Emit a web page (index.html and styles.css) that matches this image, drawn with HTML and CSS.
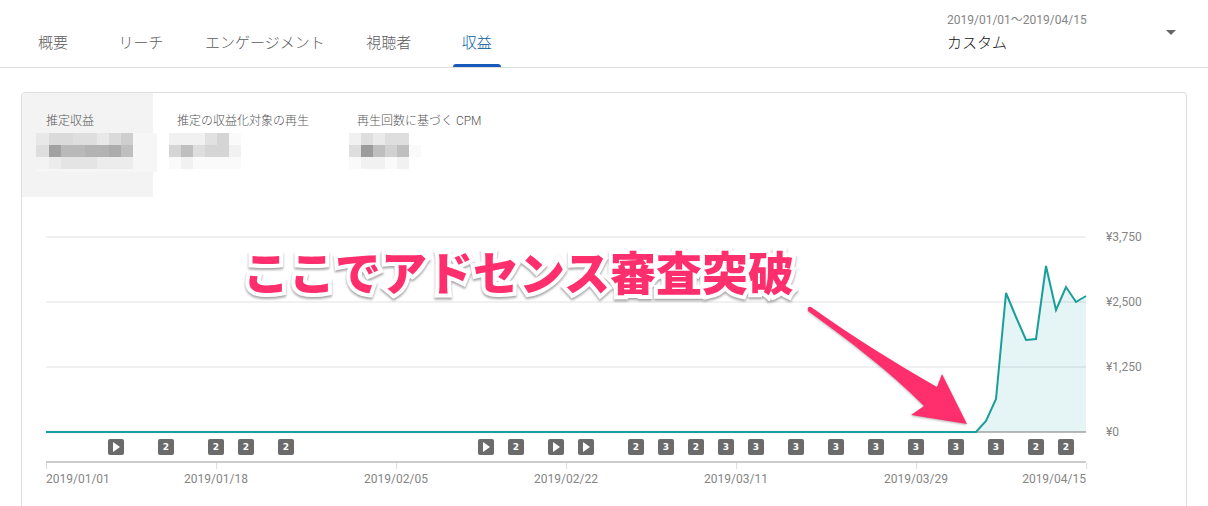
FILE: index.html
```html
<!DOCTYPE html>
<html lang="ja">
<head>
<meta charset="utf-8">
<meta name="viewport" content="width=device-width, initial-scale=1">
<title>収益</title>
<link rel="stylesheet" href="styles.css">
</head>
<body>
<header class="header">
  <nav class="tabs">
    <a class="tab" href="#overview">概要</a>
    <a class="tab" href="#reach">リーチ</a>
    <a class="tab" href="#engagement">エンゲージメント</a>
    <a class="tab" href="#audience">視聴者</a>
    <a class="tab tab-active" href="#revenue" aria-current="page">収益</a>
  </nav>
  <button class="period" type="button">
    <span class="period-text">
      <span class="period-range">2019/01/01～2019/04/15</span>
      <span class="period-name">カスタム</span>
    </span>
    <svg class="caret" width="10" height="5" viewBox="0 0 10 5" aria-hidden="true"><path d="M0 0h10L5 5z"/></svg>
  </button>
</header>
<main class="card">
  <div class="metrics">
    <button class="metric metric-active" type="button">
      <span>推定収益</span>
      <svg class="mosaic" width="121" height="39" viewBox="0 0 121 39" aria-hidden="true">
        <path fill="#f6f6f6" d="M0 36h121v3H0zM97 0h24v36H97z"/>
        <path fill="#e8e8e8" d="M0 0h13v12H0zM61 0h12v12H61z"/>
        <path fill="#dadada" d="M13 0h24v12H13zM73 0h12v12H73z"/>
        <path fill="#dedede" d="M37 0h24v12H37zM0 12h13v12H0z"/>
        <path fill="#cecece" d="M85 0h12v12H85z"/>
        <path fill="#a2a2a2" d="M13 12h12v12H13z"/>
        <path fill="#b9b9b9" d="M25 12h24v12H25z"/>
        <path fill="#b3b3b3" d="M49 12h36v12H49z"/>
        <path fill="#acacac" d="M73 12h12v12H73z"/>
        <path fill="#bfbfbf" d="M85 12h12v12H85z"/>
        <path fill="#ececec" d="M13 24h12v12H13zM61 24h36v12H61z"/>
        <path fill="#e4e4e4" d="M25 24h36v12H25z"/>
      </svg>
    </button>
    <button class="metric" type="button">
      <span>推定の収益化対象の再生</span>
      <svg class="mosaic" width="72" height="36" viewBox="0 0 72 36" aria-hidden="true">
        <path fill="#f1f1f1" d="M0 0h36v12H0zM60 12h12v12H60zM12 24h12v12H12z"/>
        <path fill="#e1e1e1" d="M36 0h12v12H36z"/>
        <path fill="#d5d5d5" d="M48 0h12v12H48zM0 12h12v12H0zM36 12h24v12H36z"/>
        <path fill="#bfbfbf" d="M12 12h12v12H12z"/>
        <path fill="#dedede" d="M24 12h12v12H24z"/>
        <path fill="#fafafa" d="M60 0h12v12H60zM0 24h12v12H0zM24 24h48v12H24z"/>
      </svg>
    </button>
    <button class="metric" type="button">
      <span>再生回数に基づく CPM</span>
      <svg class="mosaic" width="72" height="36" viewBox="0 0 72 36" aria-hidden="true">
        <path fill="#f1f1f1" d="M0 0h12v12H0zM12 24h24v12H12zM48 24h12v12H48z"/>
        <path fill="#dedede" d="M12 0h12v12H12zM36 0h24v12H36zM0 12h12v12H0z"/>
        <path fill="#eaeaea" d="M24 0h12v12H24z"/>
        <path fill="#9c9c9c" d="M12 12h12v12H12z"/>
        <path fill="#bfbfbf" d="M24 12h12v12H24zM48 12h12v12H48z"/>
        <path fill="#d1d1d1" d="M36 12h12v12H36z"/>
        <path fill="#fafafa" d="M60 12h12v12H60zM0 24h12v12H0zM36 24h12v12H36z"/>
      </svg>
    </button>
  </div>
  <section class="chart">
    <div class="plot">
      <svg class="series" viewBox="0 0 1040 195" preserveAspectRatio="none" aria-hidden="true">
        <path class="grid" d="M0 0H1040M0 65H1040M0 130H1040"/>
        <path class="area" d="M930 195L940 184 950 162 960 56 970 80 980 103 990 102 1000 29 1010 73 1020 50 1030 65 1040 59V195z"/>
        <path class="zero" d="M0 195H1040"/>
        <path class="line" d="M0 195H930L940 184 950 162 960 56 970 80 980 103 990 102 1000 29 1010 73 1020 50 1030 65 1040 59"/>
      </svg>
      <svg class="arrow" width="170" height="130" viewBox="800 300 170 130" aria-hidden="true">
        <path d="M811 307C852 336 893 362 937 387L942 374 967 424 911 415 924 406C888 370 848 340 808 311Q807 306 811 307z"/>
      </svg>
      <p class="callout">ここでアドセンス審査突破</p>
    </div>
    <div class="scale">
      <span>¥3,750</span><span>¥2,500</span><span>¥1,250</span><span>¥0</span>
    </div>
    <div class="timeline">
      <div class="marks" id="marks"></div>
      <div class="dates" id="dates"></div>
    </div>
  </section>
</main>
<script src="chart.js"></script>
</body>
</html>
```
FILE: styles.css
```css
* { box-sizing: border-box; }
body {
  margin: 0;
  min-height: 100vh;
  display: flex;
  flex-direction: column;
  background: #fff;
  color: #555;
  font-family: Roboto, "Noto Sans CJK JP", sans-serif;
  font-size: 12px;
  font-weight: 300;
  line-height: 16px;
}
button {
  border: 0;
  background: none;
  padding: 0;
  font: inherit;
  color: inherit;
  text-align: left;
  cursor: pointer;
}
.header {
  display: flex;
  justify-content: space-between;
  height: 68px;
  padding: 0 32px 0 29px;
  border-bottom: 1px solid #dedede;
}
.tabs { display: flex; gap: 40px; }
.tab {
  min-width: 48px;
  padding-top: 33px;
  color: #5c5c5c;
  font-size: 15px;
  line-height: 20px;
  text-align: center;
  text-decoration: none;
  white-space: nowrap;
}
.tab-active { position: relative; color: #045a9f; }
.tab-active::after {
  content: "";
  position: absolute;
  left: 0;
  right: 0;
  bottom: 0;
  height: 3px;
  border-radius: 3px 3px 0 0;
  background: #185abc;
}
.period {
  display: flex;
  justify-content: space-between;
  align-items: center;
  width: 229px;
  padding-bottom: 2px;
}
.period-text { display: flex; flex-direction: column; gap: 5px; }
.period-range { color: #858585; font-weight: 400; }
.period-name { color: #111; font-size: 15px; line-height: 20px; }
.caret { fill: #666; }
.card {
  flex: 1;
  margin: 24px 21px 0;
  border: 1px solid #dedede;
  border-bottom: 0;
  border-radius: 4px 4px 0 0;
}
.metrics { display: flex; }
.metric {
  position: relative;
  display: flex;
  min-width: 131px;
  height: 104px;
  padding: 20px 24px;
  white-space: nowrap;
}
.metric-active { background: #f3f3f3; }
.mosaic { position: absolute; left: 16px; top: 40px; }
.metric-active .mosaic { left: 14px; }
.chart {
  display: grid;
  grid-template-columns: 1fr 80px;
  column-gap: 20px;
  padding: 40px 0 16px 24px;
}
.plot { position: relative; height: 195px; }
.series { display: block; width: 100%; height: 100%; overflow: visible; }
.series path { fill: none; vector-effect: non-scaling-stroke; }
.series .grid { stroke: #f0f0f0; stroke-width: 2px; }
.series .zero { stroke: #777; stroke-width: 1px; }
.series .area { fill: rgb(0 160 155 / 10%); }
.series .line { stroke: #1a9e9b; stroke-width: 2px; }
.arrow {
  position: absolute;
  right: 116px;
  top: 63px;
  overflow: visible;
  fill: #ff2e6d;
  filter: drop-shadow(0 1px 1px rgb(0 0 0 / 30%));
}
.callout {
  position: absolute;
  left: 197px;
  top: 1px;
  margin: 0;
  color: #ff2e6d;
  font-family: "Noto Sans CJK JP", sans-serif;
  font-size: 46px;
  font-weight: 900;
  line-height: 64px;
  white-space: nowrap;
  -webkit-text-stroke: 8px #fff;
  stroke-linejoin: round;
  paint-order: stroke fill;
  filter: drop-shadow(0 2px 1px rgb(0 0 0 / 35%));
}
.scale {
  display: flex;
  flex-direction: column;
  justify-content: space-between;
  margin: -8px 0;
  font-weight: 400;
  color: #858585;
}
.timeline { padding-top: 7px; }
.marks {
  position: relative;
  height: 24px;
  border-bottom: 2px solid #ccc;
}
.mark {
  position: absolute;
  top: 0;
  display: grid;
  place-items: center;
  width: 16px;
  height: 16px;
  margin-left: -8px;
  border-radius: 2px;
  background: #6b6b6b;
  color: #fff;
  font-family: "DejaVu Sans", sans-serif;
  font-size: 9px;
  font-weight: 700;
}
.mark svg { fill: #fff; }
.dates { position: relative; height: 28px; color: #858585; font-weight: 400; }
.date {
  position: absolute;
  top: 0;
  padding-top: 8px;
  transform: translateX(-50%);
}
.date:first-child { transform: none; }
.date:last-child { transform: translateX(-100%); }
.tick {
  position: absolute;
  top: 0;
  left: 50%;
  width: 1px;
  height: 6px;
  background: #ddd;
}
.date:first-child .tick { left: 0; }
.date:last-child .tick { left: 100%; }
```
FILE: chart.js
```javascript
const LAST_DAY = 104;
const at = day => (day / LAST_DAY * 100) + "%";

// Days with uploads: [day, number of videos]
const uploads = [
  [7, 1], [12, 2], [17, 2], [20, 2], [24, 2], [44, 1], [47, 2], [51, 1],
  [54, 1], [59, 2], [62, 3], [65, 2], [68, 3], [71, 3], [75, 3], [79, 3],
  [83, 3], [87, 3], [91, 3], [95, 3], [99, 2], [102, 2]
];
const play = '<svg width="7" height="10" viewBox="0 0 7 10"><path d="M0 0l7 5-7 5z"/></svg>';
for (const [day, count] of uploads) {
  const mark = document.createElement("button");
  mark.type = "button";
  mark.className = "mark";
  mark.style.left = at(day);
  if (count === 1) {
    mark.innerHTML = play;
    mark.setAttribute("aria-label", "動画");
  } else {
    mark.textContent = count;
  }
  document.getElementById("marks").append(mark);
}

const dates = [
  [0, "2019/01/01"], [17, "2019/01/18"], [35, "2019/02/05"], [52, "2019/02/22"],
  [69, "2019/03/11"], [87, "2019/03/29"], [104, "2019/04/15"]
];
for (const [day, text] of dates) {
  const label = document.createElement("span");
  label.className = "date";
  label.style.left = at(day);
  label.textContent = text;
  const tick = document.createElement("i");
  tick.className = "tick";
  label.append(tick);
  document.getElementById("dates").append(label);
}
```
